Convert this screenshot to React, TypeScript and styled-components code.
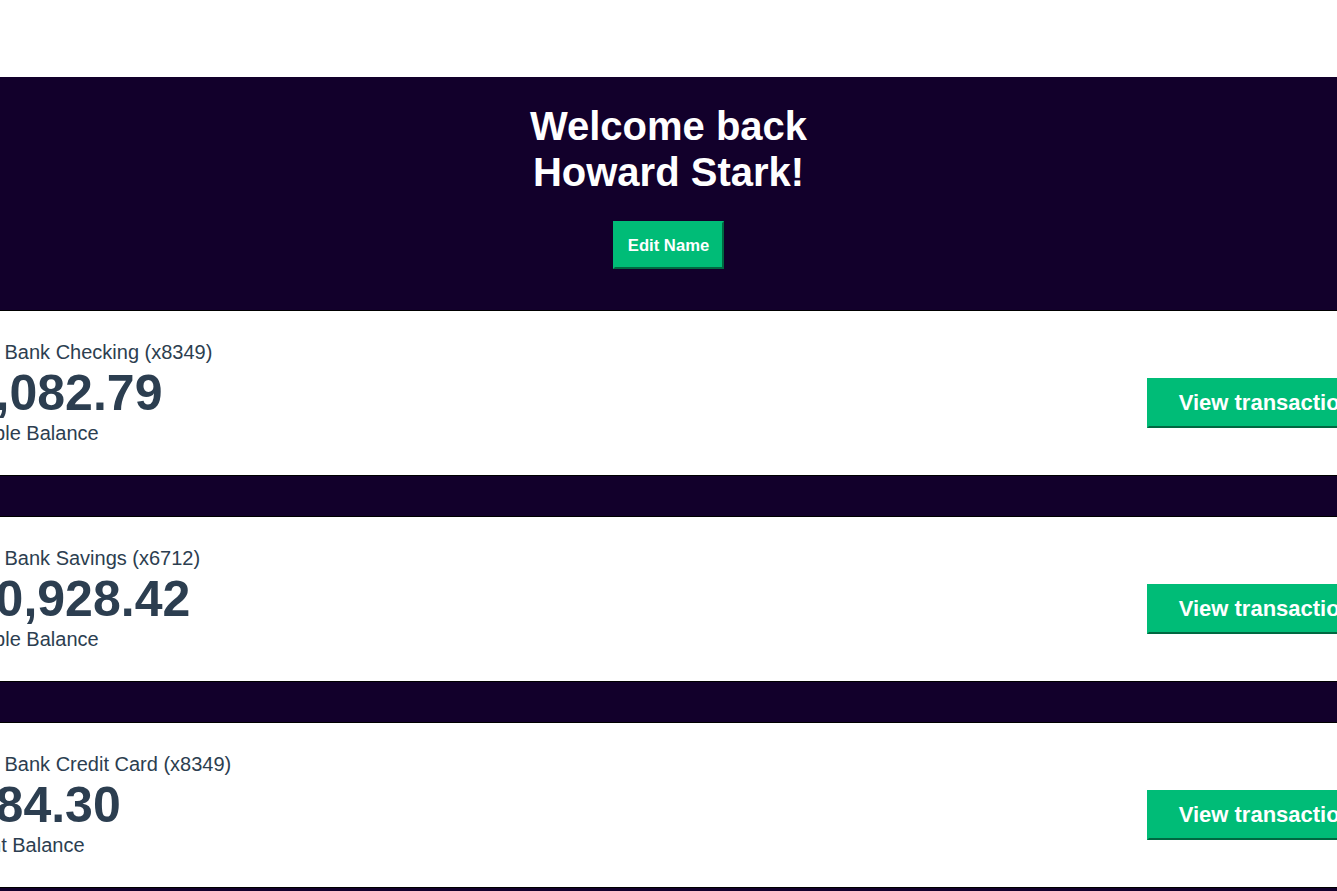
import styled, { createGlobalStyle } from "styled-components";

const GlobalStyle = createGlobalStyle`
    html, body {
        margin: 0;
        padding: 0;
        overflow-x: hidden;
    }
    body {
        font-family: "Liberation Sans", Arial, Helvetica, sans-serif;
        color: #2c3e50;
        background: #fff;
    }
`;

const Page = styled.div`
    display: flex;
    flex-direction: column;
    min-height: 100vh;
`;

const TopBar = styled.nav`
    height: 77px;
    background-color: #fff;
`;

const Main = styled.main`
    flex: 1;
    display: flex;
    flex-direction: column;
    align-items: center;
    background-color: #12002b;
    padding-bottom: 40px;
`;

const Header = styled.div`
    color: #fff;
    text-align: center;
    padding: 26px 0 41px;
`;

const Title = styled.h1`
    margin: 0 0 26px;
    font-size: 40px;
    line-height: 46px;
    font-weight: bold;
`;

const EditButton = styled.button`
    font-family: "Liberation Sans", Arial, sans-serif;
    font-size: 16.67px;
    font-weight: bold;
    color: #fff;
    background-color: #00bc77;
    border: 2px outset #00bc77;
    padding: 12.5px;
    line-height: 19px;
    cursor: pointer;
`;

// account card, wider than the window and centred, as in the capture
const Account = styled.section`
    display: flex;
    flex-direction: row;
    justify-content: space-between;
    align-items: center;
    flex-shrink: 0;
    width: 1519px;
    box-sizing: border-box;
    padding: 30px;
    margin-bottom: 40px;
    border: 1px solid #000;
    background-color: #fff;
    text-align: left;
`;

const AccountContent = styled.div`
    flex: 1;
    width: 100%;
`;

const AccountTitle = styled.h3`
    margin: 0;
    font-size: 20px;
    font-weight: normal;
    line-height: 23px;
`;

const AccountAmount = styled.p`
    margin: 0;
    font-size: 50px;
    font-weight: bold;
    line-height: 58px;
`;

const AccountDescription = styled.p`
    margin: 0;
    font-size: 20px;
    line-height: 23px;
`;

const Cta = styled.div`
    flex: 0;
`;

const TransactionButton = styled.button`
    display: block;
    width: 250px;
    margin-top: 20px;
    padding: 10px;
    font-family: "Liberation Sans", Arial, sans-serif;
    font-size: 22px;
    font-weight: bold;
    line-height: 26px;
    color: #fff;
    background-color: #00bc77;
    border: 2px outset #00bc77;
    cursor: pointer;
`;

interface IAccount {
    id: string;
    title: string;
    amount: string;
    description: string;
}

const accounts: IAccount[] = [
    { id: "checking", title: "Argent Bank Checking (x8349)", amount: "$2,082.79", description: "Available Balance" },
    { id: "savings", title: "Argent Bank Savings (x6712)", amount: "$10,928.42", description: "Available Balance" },
    { id: "credit", title: "Argent Bank Credit Card (x8349)", amount: "$184.30", description: "Current Balance" },
];

function App() {
    return (
        <>
            <GlobalStyle />
            <Page>
                <TopBar />
                <Main>
                    <Header>
                        <Title>
                            Welcome back
                            <br />
                            Howard Stark!
                        </Title>
                        <EditButton>Edit Name</EditButton>
                    </Header>
                    {accounts.map((account) => (
                        <Account key={account.id}>
                            <AccountContent>
                                <AccountTitle>{account.title}</AccountTitle>
                                <AccountAmount>{account.amount}</AccountAmount>
                                <AccountDescription>{account.description}</AccountDescription>
                            </AccountContent>
                            <Cta>
                                <TransactionButton>View transactions</TransactionButton>
                            </Cta>
                        </Account>
                    ))}
                </Main>
            </Page>
        </>
    );
}

export default App;
